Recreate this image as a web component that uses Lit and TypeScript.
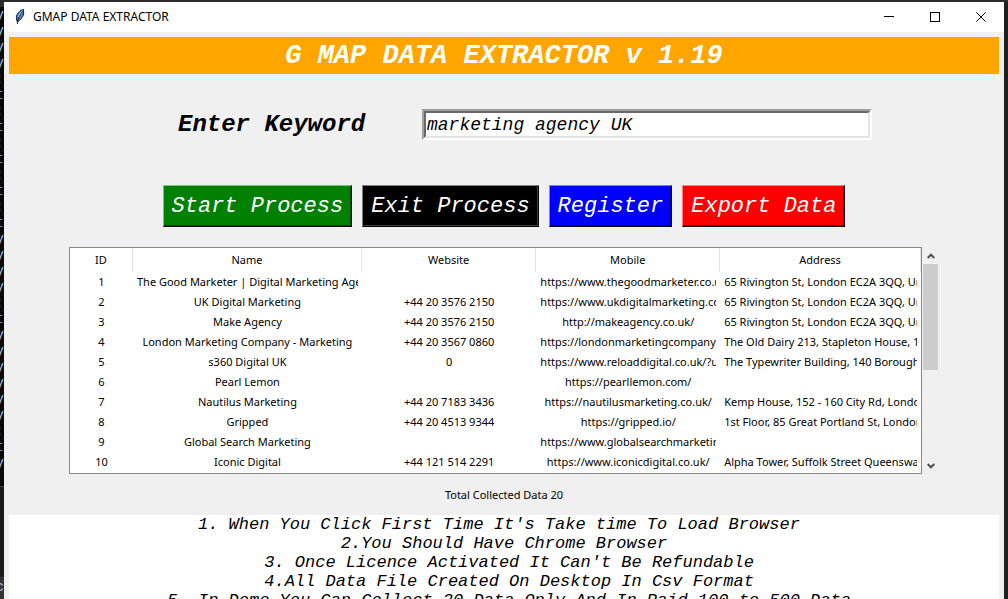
import { LitElement, html, css } from "lit";
import { customElement, state } from "lit/decorators.js";

type Row = [string, string, string, string, string];

const COLUMNS = ["ID", "Name", "Website", "Mobile", "Address"];

const ROWS: Row[] = [
  ["1", "The Good Marketer | Digital Marketing Agency", "", "https://www.thegoodmarketer.co.uk/", "65 Rivington St, London EC2A 3QQ, United Kingdom"],
  ["2", "UK Digital Marketing", "+44 20 3576 2150", "https://www.ukdigitalmarketing.co.uk/", "65 Rivington St, London EC2A 3QQ, United Kingdom"],
  ["3", "Make Agency", "+44 20 3576 2150", "http://makeagency.co.uk/", "65 Rivington St, London EC2A 3QQ, United Kingdom"],
  ["4", "London Marketing Company - Marketing", "+44 20 3567 0860", "https://londonmarketingcompany.co.uk/", "The Old Dairy 213, Stapleton House, 110 Clifton St"],
  ["5", "s360 Digital UK", "0", "https://www.reloaddigital.co.uk/?utm", "The Typewriter Building, 140 Borough High St"],
  ["6", "Pearl Lemon", "", "https://pearllemon.com/", ""],
  ["7", "Nautilus Marketing", "+44 20 7183 3436", "https://nautilusmarketing.co.uk/", "Kemp House, 152 - 160 City Rd, London EC1V 2NX"],
  ["8", "Gripped", "+44 20 4513 9344", "https://gripped.io/", "1st Floor, 85 Great Portland St, London W1W 7LT"],
  ["9", "Global Search Marketing", "", "https://www.globalsearchmarketing.co.uk/", ""],
  ["10", "Iconic Digital", "+44 121 514 2291", "https://www.iconicdigital.co.uk/", "Alpha Tower, Suffolk Street Queensway, Birmingham"],
];

const NOTES = [
  "1. When You Click First Time It's Take time To Load Browser ",
  "2.You Should Have Chrome Browser",
  " 3. Once Licence Activated It Can't Be Refundable",
  " 4.All Data File Created On Desktop In Csv Format",
  " 5. In Demo You Can Collect 20 Data Only And In Paid 100 to 500 Data",
];

const EDITOR_LINES = "yyyy:t:t:t:t:tyyyy:tyyyyyy:ty".split("");

@customElement("title-bar")
class TitleBar extends LitElement {
  static styles = css`
    :host {
      display: flex;
      align-items: center;
      height: 30px;
      background: #fff;
      color: #000;
    }
    .logo {
      margin-left: 10px;
    }
    .title {
      flex: 1;
      margin: 0 7px;
      font: 12px/16px "Segoe UI", "Noto Sans", sans-serif;
    }
    .control {
      width: 46px;
      height: 30px;
      padding: 0;
      border: 0;
      background: none;
      display: grid;
      place-items: center;
    }
    .control:hover {
      background: #e5e5e5;
    }
    svg {
      display: block;
    }
  `;

  render() {
    return html`
      <svg class="logo" width="12" height="16" viewBox="0 0 12 16" aria-hidden="true">
        <path d="M9.5.5C6 1 2.600 4.500 2.300 8.500L3 12.500C6 12 9 8 9.700 5Z" fill="#3f82cc" stroke="#15202e" />
        <path d="M8.500 2C5.500 5 4.200 9 3.300 15" fill="none" stroke="#15202e" />
        <path d="M8.500 1.500C6.500 3 5 5.500 4.500 8" fill="none" stroke="#a9cdf0" />
      </svg>
      <span class="title">GMAP DATA EXTRACTOR</span>
      <button class="control" aria-label="Minimize">
        <svg width="10" height="10" shape-rendering="crispEdges"><path d="M0 4.500H10" stroke="#000" /></svg>
      </button>
      <button class="control" aria-label="Maximize">
        <svg width="10" height="10" shape-rendering="crispEdges"><path d="M.5.5H9.500V9.500H.5Z" fill="none" stroke="#000" /></svg>
      </button>
      <button class="control" aria-label="Close">
        <svg width="10" height="10"><path d="M.3.3L9.700 9.700M9.700.3L.3 9.700" stroke="#000" /></svg>
      </button>
    `;
  }
}

@customElement("result-table")
class ResultTable extends LitElement {
  static styles = css`
    :host {
      display: flex;
      font: 11px/20px "Segoe UI", "Noto Sans", sans-serif;
      color: #000;
    }
    .frame {
      flex: 1;
      min-width: 0;
      border: 1px solid #828790;
      background: #fff;
      padding-bottom: 1px;
    }
    table {
      width: 100%;
      table-layout: fixed;
      border-collapse: separate;
      border-spacing: 0;
    }
    .w0 { width: 7.4%; }
    .w1 { width: 26.9%; }
    .w2 { width: 20.5%; }
    .w3 { width: 21.6%; }
    th {
      height: 24px;
      padding: 0;
      border-right: 1px solid #e5e5e5;
      font-weight: 400;
    }
    td {
      height: 20px;
      padding: 0 4px;
      text-align: center;
    }
    .clip {
      display: block;
      height: 20px;
      overflow: hidden;
      white-space: nowrap;
    }
    .scroll {
      width: 15px;
      margin-left: 1px;
      display: flex;
      flex-direction: column;
    }
    .arrow {
      height: 17px;
      padding: 0;
      border: 0;
      background: none;
      display: grid;
      place-items: center;
    }
    .track {
      flex: 1;
    }
    .thumb {
      height: 55%;
      background: #cdcdcd;
    }
    svg {
      display: block;
    }
  `;

  render() {
    return html`
      <div class="frame">
        <table>
          <colgroup>
            ${COLUMNS.map((_, i) => html`<col class="w${i}" />`)}
          </colgroup>
          <thead>
            <tr>${COLUMNS.map((c) => html`<th scope="col">${c}</th>`)}</tr>
          </thead>
          <tbody>
            ${ROWS.map((r) => html`<tr>${r.map((v) => html`<td><span class="clip">${v}</span></td>`)}</tr>`)}
          </tbody>
        </table>
      </div>
      <div class="scroll">
        <button class="arrow" aria-label="Scroll up">
          <svg width="8" height="6"><path d="M.7 5L4 1.700L7.300 5" fill="none" stroke="#505050" stroke-width="2" /></svg>
        </button>
        <div class="track"><div class="thumb"></div></div>
        <button class="arrow" aria-label="Scroll down">
          <svg width="8" height="6"><path d="M.7 1L4 4.300L7.300 1" fill="none" stroke="#505050" stroke-width="2" /></svg>
        </button>
      </div>
    `;
  }
}

@customElement("app-root")
class AppRoot extends LitElement {
  @state() private keyword = "marketing agency UK";

  static styles = css`
    :host {
      display: flex;
      height: 100vh;
      box-sizing: border-box;
      padding-top: 2px;
      overflow: hidden;
      background: #2b2b2b;
      color: #000;
      font-family: "Courier New", "Liberation Mono", monospace;
    }
    .editor {
      width: 4px;
      overflow: hidden;
      background: #1b1b1b;
      display: flex;
      flex-direction: column;
      border-top: 5px solid #2d2d2d;
      box-sizing: border-box;
    }
    .code {
      background: #080808;
      padding-bottom: 15px;
      border-bottom: 1px solid #444;
      font: 14px/16px "Liberation Mono", monospace;
    }
    .line {
      display: flex;
      justify-content: flex-end;
      color: #9cc8ec;
    }
    .kw {
      color: #4f93cf;
    }
    .dim {
      color: #2c2c58;
    }
    .status {
      margin-top: auto;
      height: 22px;
      background: #333;
      font: 14px/20px "Liberation Mono", monospace;
    }
    .desk {
      width: 4px;
      background: #1f1f1f;
    }
    .window {
      flex: 1;
      min-width: 0;
      display: flex;
      flex-direction: column;
      background: #f0f0f0;
    }
    .body {
      flex: 1;
      min-height: 0;
      display: flex;
      flex-direction: column;
      padding: 5px 5px 0;
    }
    .banner {
      margin: 0;
      padding-top: 2px;
      background: #ffa500;
      color: #fff;
      text-align: center;
      font-size: 27px;
      line-height: 35px;
      font-weight: 700;
      font-style: italic;
    }
    .search {
      display: flex;
      justify-content: space-between;
      align-items: center;
      margin-top: 35px;
      padding: 0 127px 0 169px;
    }
    .label {
      font-size: 24px;
      line-height: 28px;
      font-weight: 700;
      font-style: italic;
      white-space: nowrap;
    }
    .entry {
      flex: 0 1 450px;
      min-width: 0;
      box-sizing: border-box;
      display: flex;
      border: 2px solid;
      border-color: #a0a0a0 #fff #fff #a0a0a0;
    }
    .entry input {
      width: 100%;
      box-sizing: border-box;
      height: 27px;
      margin: 0;
      padding: 0 1px;
      border: 2px solid;
      border-color: #696969 #e3e3e3 #e3e3e3 #696969;
      border-radius: 0;
      outline: 0;
      background: #fff;
      color: #000;
      font: italic 18px/22px "Courier New", "Liberation Mono", monospace;
    }
    .actions {
      display: flex;
      justify-content: center;
      gap: 10px;
      margin-top: 45px;
    }
    .action {
      height: 42px;
      padding: 2px 8px 0;
      border: 1px solid;
      border-radius: 0;
      color: #fff;
      font: italic 22px/30px "Courier New", "Liberation Mono", monospace;
      white-space: nowrap;
    }
    .start {
      background: #008000;
      border-color: #80c080 #000 #000 #80c080;
      box-shadow: inset -1px -1px #005000;
    }
    .exit {
      background: #000;
      border-color: #808080 #000 #000 #808080;
      box-shadow: inset -1px -1px #404040;
    }
    .register {
      background: #00f;
      border-color: #8080ff #000 #000 #8080ff;
      box-shadow: inset -1px -1px #0000a0;
    }
    .export {
      background: #f00;
      border-color: #ff8080 #000 #000 #ff8080;
      box-shadow: inset -1px -1px #a00000;
    }
    .results {
      margin: 20px 61px 0 60px;
    }
    .total {
      margin: 0;
      text-align: center;
      font: 11px/41px "Segoe UI", "Noto Sans", sans-serif;
    }
    .notes {
      flex: 1;
      min-height: 0;
      overflow: hidden;
      background: #fff;
      font-size: 17px;
      line-height: 19px;
      font-style: italic;
      text-align: center;
    }
    .note {
      margin: 0;
      white-space: pre;
    }
  `;

  private onInput(e: Event) {
    this.keyword = (e.target as HTMLInputElement).value;
  }

  render() {
    return html`
      <div class="editor" aria-hidden="true">
        <div class="code">
          ${EDITOR_LINES.map((c) => html`<div class="line ${c === "t" ? "kw" : c === ":" ? "dim" : ""}">${c}</div>`)}
        </div>
        <div class="status"><div class="line">c</div></div>
      </div>
      <div class="window">
        <title-bar></title-bar>
        <main class="body">
          <h1 class="banner">G MAP DATA EXTRACTOR v 1.19</h1>
          <div class="search">
            <label class="label" for="keyword">Enter Keyword</label>
            <div class="entry">
              <input id="keyword" type="text" spellcheck="false" .value=${this.keyword} @input=${this.onInput} />
            </div>
          </div>
          <div class="actions">
            <button class="action start">Start Process</button>
            <button class="action exit">Exit Process</button>
            <button class="action register">Register</button>
            <button class="action export">Export Data</button>
          </div>
          <result-table class="results"></result-table>
          <p class="total">Total Collected Data 20</p>
          <div class="notes">${NOTES.map((n) => html`<p class="note">${n}</p>`)}</div>
        </main>
      </div>
      <div class="desk"></div>
    `;
  }
}
